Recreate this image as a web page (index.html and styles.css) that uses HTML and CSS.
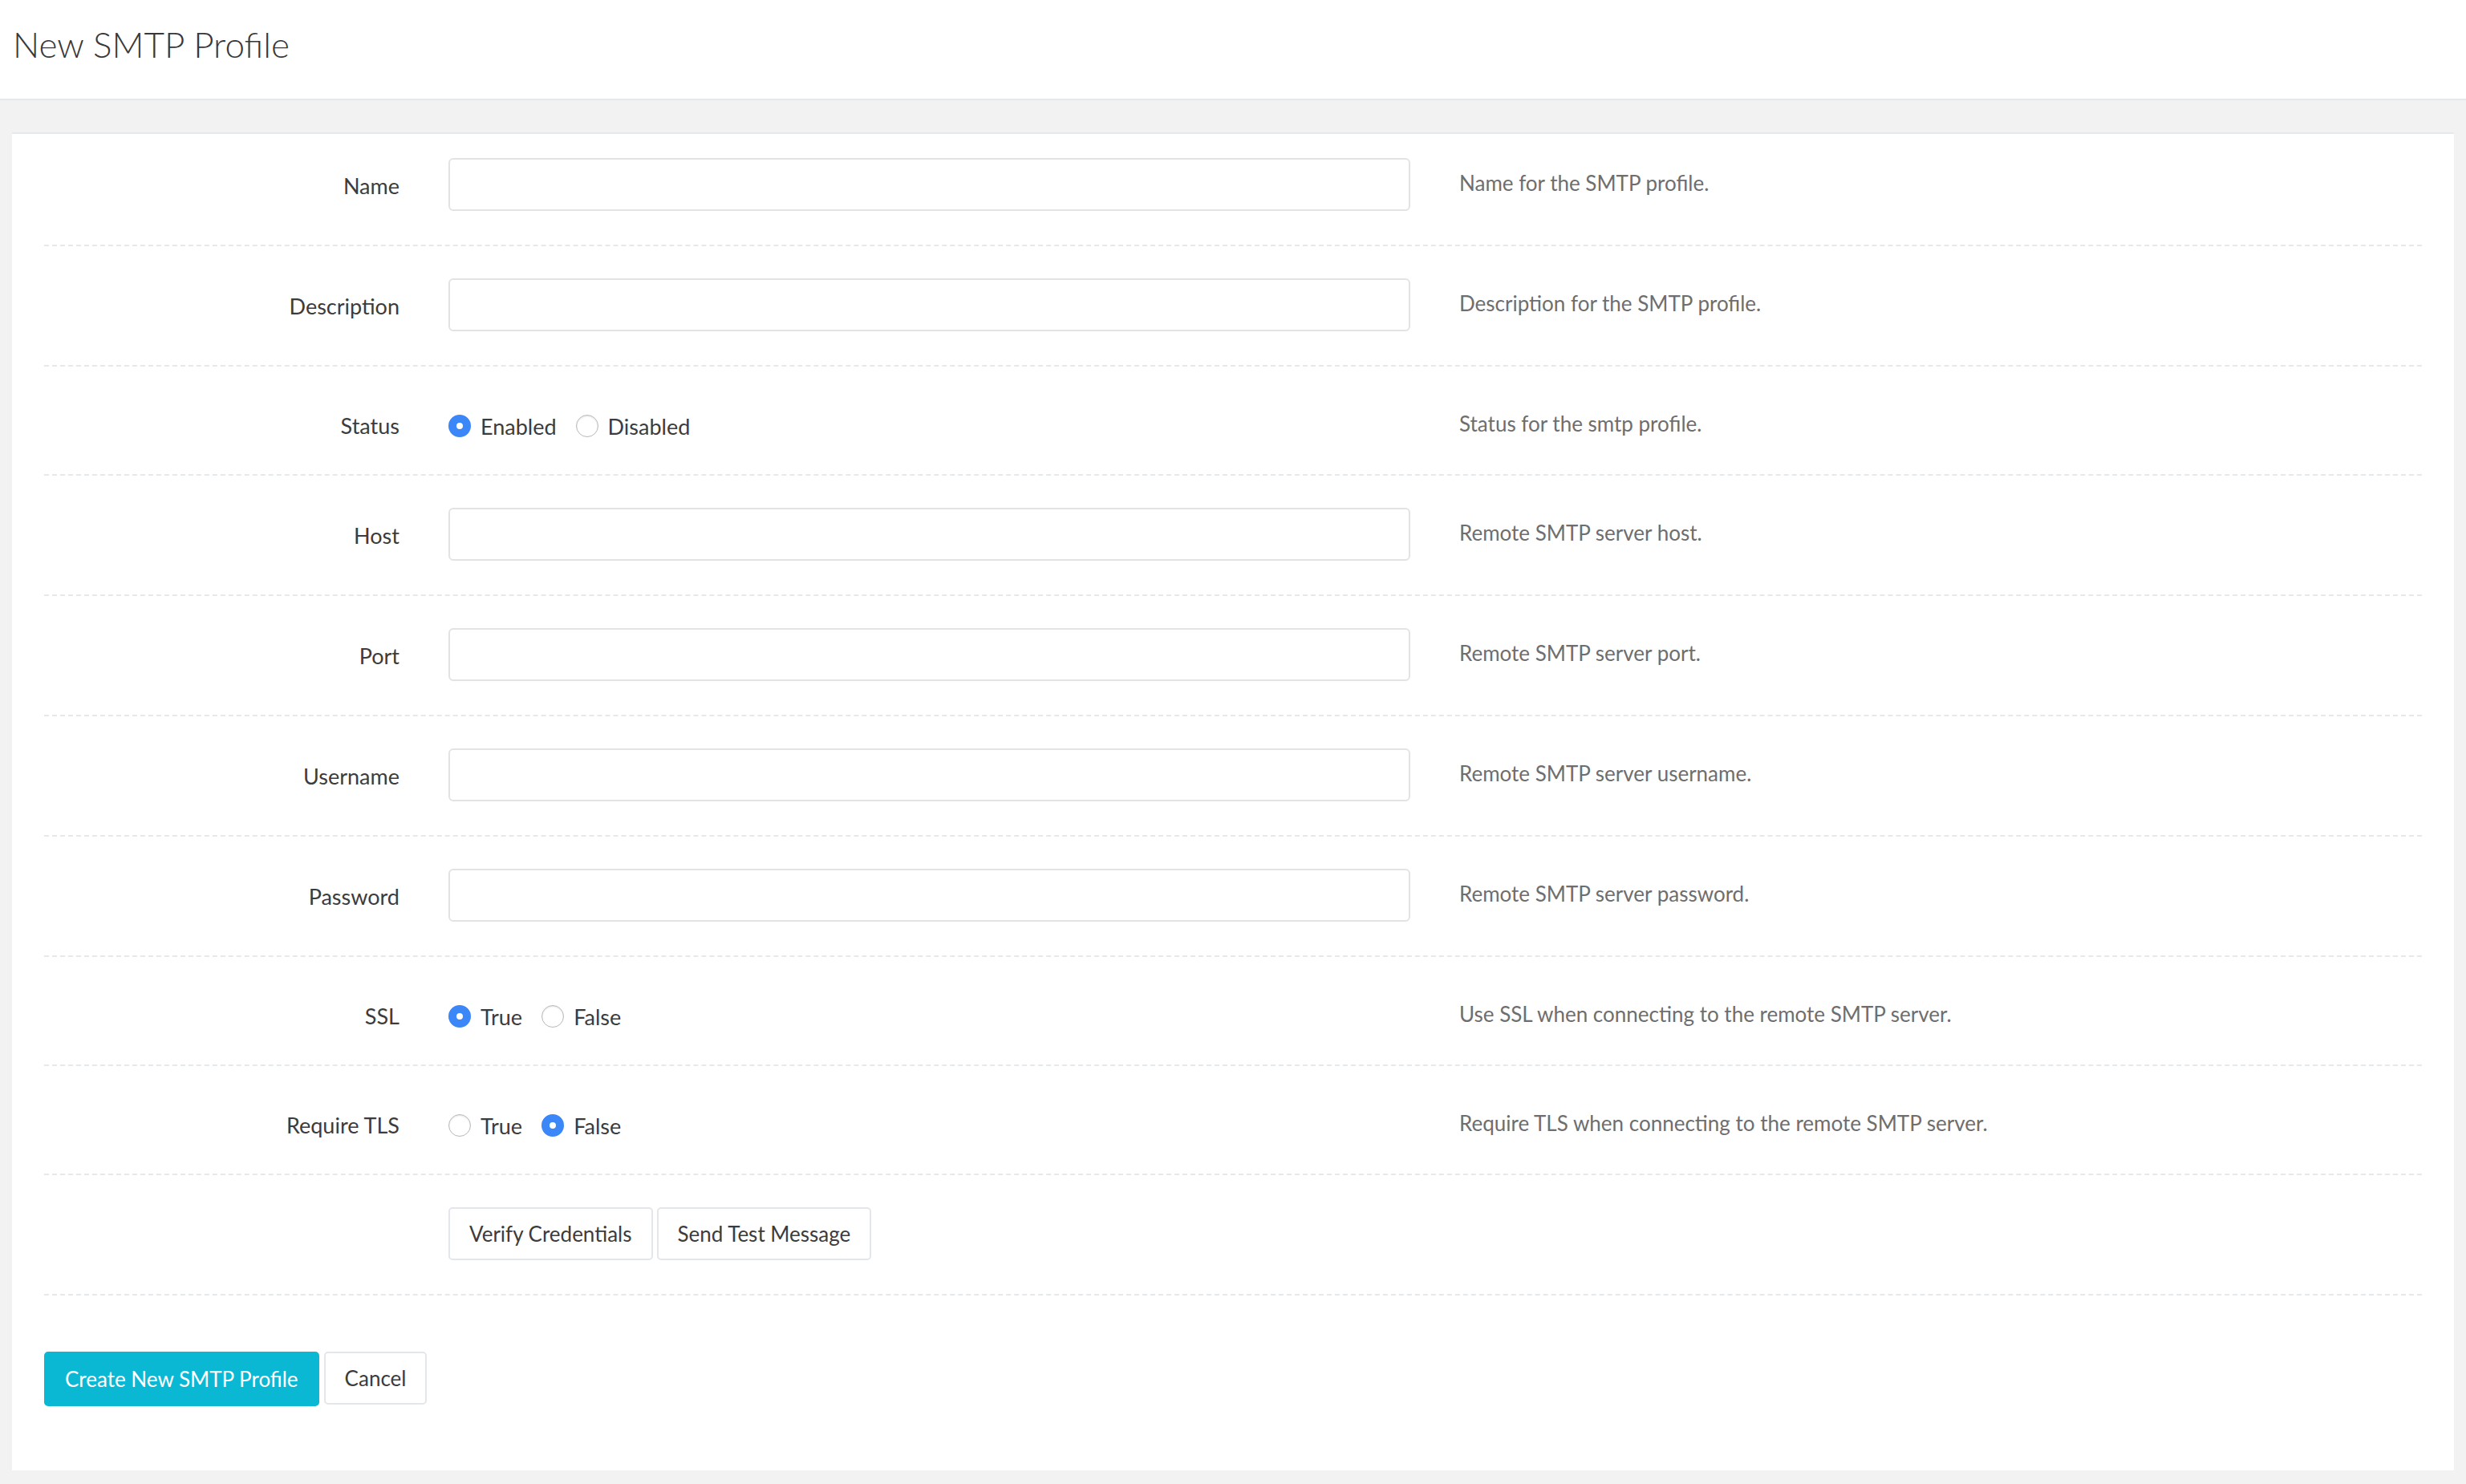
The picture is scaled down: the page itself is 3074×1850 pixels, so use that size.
FILE: index.html
```html
<!DOCTYPE html>
<html lang="en">
<head>
    <meta charset="UTF-8">
    <meta name="viewport" content="width=device-width, initial-scale=1.0">
    <title>New SMTP Profile</title>
    <link rel="stylesheet" href="styles.css">
</head>
<body>
    <div class="page-header">
        <h1>New SMTP Profile</h1>
    </div>

    <div class="page-body">
        <form class="card" id="smtpForm">
            <div class="form-row">
                <label for="name" class="row-label">Name</label>
                <input type="text" id="name" name="name" class="text-input">
                <div class="help">Name for the SMTP profile.</div>
            </div>

            <div class="form-row">
                <label for="description" class="row-label">Description</label>
                <input type="text" id="description" name="description" class="text-input">
                <div class="help">Description for the SMTP profile.</div>
            </div>

            <div class="form-row radio-row">
                <div class="row-label">Status</div>
                <div class="radio-group">
                    <label class="radio"><input type="radio" name="status" checked> Enabled</label>
                    <label class="radio"><input type="radio" name="status"> Disabled</label>
                </div>
                <div class="help">Status for the smtp profile.</div>
            </div>

            <div class="form-row">
                <label for="host" class="row-label">Host</label>
                <input type="text" id="host" name="host" class="text-input">
                <div class="help">Remote SMTP server host.</div>
            </div>

            <div class="form-row">
                <label for="port" class="row-label">Port</label>
                <input type="text" id="port" name="port" class="text-input">
                <div class="help">Remote SMTP server port.</div>
            </div>

            <div class="form-row">
                <label for="username" class="row-label">Username</label>
                <input type="text" id="username" name="username" class="text-input">
                <div class="help">Remote SMTP server username.</div>
            </div>

            <div class="form-row">
                <label for="password" class="row-label">Password</label>
                <input type="password" id="password" name="password" class="text-input">
                <div class="help">Remote SMTP server password.</div>
            </div>

            <div class="form-row radio-row">
                <div class="row-label">SSL</div>
                <div class="radio-group">
                    <label class="radio"><input type="radio" name="ssl" checked> True</label>
                    <label class="radio"><input type="radio" name="ssl"> False</label>
                </div>
                <div class="help">Use SSL when connecting to the remote SMTP server.</div>
            </div>

            <div class="form-row radio-row">
                <div class="row-label">Require TLS</div>
                <div class="radio-group">
                    <label class="radio"><input type="radio" name="tls"> True</label>
                    <label class="radio"><input type="radio" name="tls" checked> False</label>
                </div>
                <div class="help">Require TLS when connecting to the remote SMTP server.</div>
            </div>

            <div class="form-row">
                <div class="row-label"></div>
                <div class="button-group">
                    <button type="button" class="btn">Verify Credentials</button>
                    <button type="button" class="btn">Send Test Message</button>
                </div>
                <div></div>
            </div>

            <div class="actions">
                <button type="submit" class="btn btn-primary">Create New SMTP Profile</button>
                <button type="button" class="btn">Cancel</button>
            </div>
        </form>
    </div>
</body>
</html>
```

FILE: styles.css
```css
body {
    margin: 0;
    font-family: Lato, "Liberation Sans", sans-serif;
    background-color: #f2f2f2;
    color: #3c3c3c;
}

.page-header {
    background: white;
    height: 123px;
    border-bottom: 2px solid #e6e9ec;
    padding: 0 16px;
    box-sizing: content-box;
}

.page-header h1 {
    margin: 0;
    padding-top: 27px;
    font-size: 44px;
    font-weight: 300;
    line-height: 56px;
    color: #383838;
}

.page-body {
    padding: 40px 15px 17px;
}

.card {
    background: white;
    border-top: 2px solid #e6e9ec;
    padding: 0 40px 80px;
}

.form-row {
    display: grid;
    grid-template-columns: 443px 1199px 1fr;
    column-gap: 61px;
    align-items: start;
    padding: 40px 0 42px;
    border-bottom: 2px dashed #e6e9ec;
}

.form-row:first-child {
    padding-top: 30px;
}

.radio-row {
    padding-bottom: 40px;
}

.row-label {
    text-align: right;
    font-size: 27px;
    line-height: 40px;
    padding-top: 15px;
    color: #3c3c3c;
}

.text-input {
    height: 66px;
    width: 100%;
    box-sizing: border-box;
    border: 2px solid #e3e3e3;
    border-radius: 6px;
    padding: 0 16px;
    font-family: inherit;
    font-size: 27px;
    outline: none;
}

.help {
    font-size: 26px;
    line-height: 40px;
    padding-top: 11px;
    color: #6e6e6e;
}

.radio-group {
    display: flex;
    align-items: center;
    gap: 24px;
    height: 40px;
    padding-top: 14px;
}

.radio-row .row-label {
    padding-top: 14px;
}

.radio {
    display: flex;
    align-items: center;
    gap: 12px;
    font-size: 27px;
    color: #3c3c3c;
}

.radio input {
    appearance: none;
    -webkit-appearance: none;
    margin: 0;
    width: 28px;
    height: 28px;
    border-radius: 50%;
    border: 1px solid #b9b9b9;
    background: white;
    box-shadow: inset 0 1px 2px rgba(0,0,0,0.12);
    box-sizing: border-box;
}

.radio input:checked {
    border: 10px solid #3b87f7;
    background: white;
    box-shadow: none;
}

.button-group {
    display: flex;
    gap: 5px;
}

.btn {
    height: 66px;
    padding: 0 24px;
    border: 2px solid #e3e6ea;
    border-radius: 5px;
    background: white;
    color: #3c3c3c;
    font-family: inherit;
    font-size: 26px;
    cursor: pointer;
}

.actions {
    display: flex;
    gap: 6px;
    margin-top: 70px;
}

.btn-primary {
    height: 68px;
    background-color: #0bb8d4;
    border-color: #0bb8d4;
    color: white;
}

.btn-primary:hover {
    background-color: #0aa8c2;
}
```
